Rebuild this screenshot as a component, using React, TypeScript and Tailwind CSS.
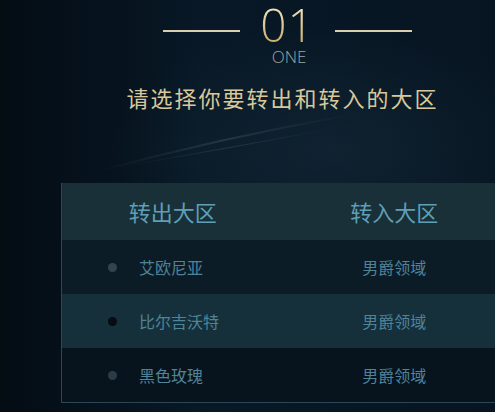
import React from "react";

const rows = [
  { from: "艾欧尼亚", to: "男爵领域", dot: "bg-[#34444f]", bg: "bg-[#0b1c26]" },
  { from: "比尔吉沃特", to: "男爵领域", dot: "bg-[#070b12]", bg: "bg-[#15303a]" },
  { from: "黑色玫瑰", to: "男爵领域", dot: "bg-[#2c3c47]", bg: "bg-[#07141e]" },
];

const cjk = { fontFamily: '"Noto Sans CJK SC", "Noto Sans", sans-serif' };

export default function App() {
  return (
    <div
      className="relative w-[495px] h-[412px] overflow-hidden bg-[#06121d]"
      style={{
        backgroundImage:
          "radial-gradient(ellipse 320px 180px at 330px 150px, rgba(40,70,85,0.25), transparent 70%), linear-gradient(90deg, #040c14 0%, #081826 40%, #071522 100%)",
      }}
    >
      <svg className="absolute left-0 top-0" width="495" height="412" aria-hidden>
        <defs>
          <linearGradient id="streak" x1="0" y1="0" x2="1" y2="0">
            <stop offset="0" stopColor="#5f7f8c" stopOpacity="0" />
            <stop offset="0.5" stopColor="#6d8c98" stopOpacity="0.22" />
            <stop offset="1" stopColor="#5f7f8c" stopOpacity="0" />
          </linearGradient>
        </defs>
        <path d="M95 172 Q 220 138 350 115" stroke="url(#streak)" strokeWidth="2" fill="none" />
        <path d="M125 166 Q 240 146 330 129" stroke="url(#streak)" strokeWidth="1" fill="none" />
      </svg>

      <div className="relative flex flex-col items-center pl-[80px] pt-[4px]">
        <div className="flex items-center gap-[20px]">
          <div className="w-[77px] h-[1.5px] bg-[#d9ceb0] mt-[14px]" />
          <div
            className="text-[46px] leading-[40px] tracking-[1px]"
            style={{
              fontFamily: '"Open Sans", "Liberation Sans", sans-serif',
              fontWeight: 300,
              backgroundImage: "linear-gradient(180deg, #f1e6c2 0%, #c9ac6c 100%)",
              WebkitBackgroundClip: "text",
              color: "transparent",
            }}
          >
            01
          </div>
          <div className="w-[77px] h-[1.5px] bg-[#d9ceb0] mt-[14px]" />
        </div>
        <div
          className="text-[17px] leading-[17px] text-[#9ea4a3] mt-[4px] ml-[3px]"
          style={{ fontFamily: '"Open Sans", "Liberation Sans", sans-serif', fontWeight: 300 }}
        >
          ONE
        </div>
        <div
          className="mt-[19px] ml-[-10px] text-[22px] leading-[26px] text-[#d8c89b] tracking-[2px]"
          style={cjk}
        >
          请选择你要转出和转入的大区
        </div>
      </div>

      <div className="relative ml-[61px] mt-[73px] w-[444px] border-l border-b border-[#2e4853] bg-[#0b1c26]">
        <div className="flex h-[57px] items-center bg-[#1a3039]">
          <div className="w-[222px] text-center text-[22px] text-[#5f9fb6]" style={cjk}>
            转出大区
          </div>
          <div className="w-[222px] text-center text-[22px] text-[#5f9fb6]" style={cjk}>
            转入大区
          </div>
        </div>
        {rows.map((r, i) => (
          <div key={i} className={`flex h-[54px] items-center ${r.bg}`}>
            <div className="w-[222px] flex items-center">
              <span className={`ml-[46px] w-[9px] h-[9px] rounded-full ${r.dot}`} />
              <span className="ml-[22px] text-[16px] text-[#4f8399]" style={cjk}>
                {r.from}
              </span>
            </div>
            <div className="w-[222px] text-center text-[16px] text-[#4f8399]" style={cjk}>
              {r.to}
            </div>
          </div>
        ))}
      </div>
    </div>
  );
}
